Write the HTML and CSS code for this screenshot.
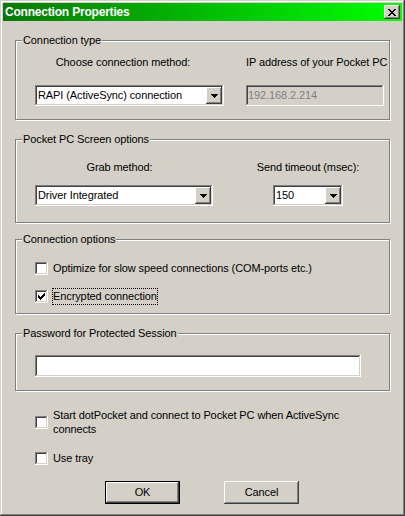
FILE: index.html
```html
<!DOCTYPE html>
<html>
<head>
<meta charset="utf-8">
<title>Connection Properties</title>
<link rel="stylesheet" href="styles.css">
</head>
<body>
<div class="window">
  <div class="titlebar">
    <span class="title">Connection Properties</span>
    <div class="close raised">
      <svg width="8" height="7" viewBox="0 0 8 7" shape-rendering="crispEdges"><path fill="#000" d="M0 0h2v1H0z M6 0h2v1H6z M1 1h2v1H1z M5 1h2v1H5z M2 2h4v1H2z M3 3h2v1H3z M2 4h4v1H2z M1 5h2v1H1z M5 5h2v1H5z M0 6h2v1H0z M6 6h2v1H6z"/></svg>
    </div>
  </div>

  <div class="content">
    <div class="group g1">
      <div class="legend">Connection type</div>
      <div class="cols">
        <div class="col col-method">
          <div class="lbl">Choose connection method:</div>
          <div class="combo">
            <span class="val">RAPI (ActiveSync) connection</span>
            <span class="drop raised"><svg width="7" height="4" viewBox="0 0 7 4" shape-rendering="crispEdges"><path fill="#000" d="M0 0h7v1H0z M1 1h5v1H1z M2 2h3v1H2z M3 3h1v1H3z"/></svg></span>
          </div>
        </div>
        <div class="col col-ip">
          <div class="lbl nowrap">IP address of your Pocket PC</div>
          <div class="field disabled">192.168.2.214</div>
        </div>
      </div>
    </div>

    <div class="group g2">
      <div class="legend">Pocket PC Screen options</div>
      <div class="cols">
        <div class="col col-grab">
          <div class="lbl">Grab method:</div>
          <div class="combo">
            <span class="val">Driver Integrated</span>
            <span class="drop raised"><svg width="7" height="4" viewBox="0 0 7 4" shape-rendering="crispEdges"><path fill="#000" d="M0 0h7v1H0z M1 1h5v1H1z M2 2h3v1H2z M3 3h1v1H3z"/></svg></span>
          </div>
        </div>
        <div class="col col-timeout">
          <div class="lbl nowrap">Send timeout (msec):</div>
          <div class="combo">
            <span class="val">150</span>
            <span class="drop raised"><svg width="7" height="4" viewBox="0 0 7 4" shape-rendering="crispEdges"><path fill="#000" d="M0 0h7v1H0z M1 1h5v1H1z M2 2h3v1H2z M3 3h1v1H3z"/></svg></span>
          </div>
        </div>
      </div>
    </div>

    <div class="group g3">
      <div class="legend">Connection options</div>
      <div class="checks">
        <div class="check">
          <span class="cb"></span>
          <span class="ctext">Optimize for slow speed connections (COM-ports etc.)</span>
        </div>
        <div class="check">
          <span class="cb"><svg width="7" height="7" viewBox="0 0 7 7" shape-rendering="crispEdges"><path fill="#000" d="M6 0h1v1H6z M5 1h2v1H5z M0 2h1v1H0z M4 2h3v1H4z M0 3h2v1H0z M3 3h3v1H3z M0 4h5v1H0z M1 5h3v1H1z M2 6h1v1H2z"/></svg></span>
          <span class="ctext focus">Encrypted connection</span>
        </div>
      </div>
    </div>

    <div class="group g4">
      <div class="legend">Password for Protected Session</div>
      <div class="field password"></div>
    </div>

    <div class="bottom">
      <div class="check multi">
        <span class="cb"></span>
        <span class="ctext wrap">Start dotPocket and connect to Pocket PC when ActiveSync connects</span>
      </div>
      <div class="check tray">
        <span class="cb"></span>
        <span class="ctext">Use tray</span>
      </div>
      <div class="buttons">
        <div class="btn default">OK</div>
        <div class="btn raised">Cancel</div>
      </div>
    </div>
  </div>
</div>
</body>
</html>
```

FILE: styles.css
```css
html, body {
  margin: 0;
  padding: 0;
  background: #d4d0c8;
}

body {
  font-family: "Liberation Sans", Arial, sans-serif;
  font-size: 11px;
  line-height: 13px;
  letter-spacing: -0.1px;
  color: #000;
}

.window {
  width: 405px;
  height: 516px;
  box-sizing: border-box;
  background: #d4d0c8;
  padding: 3px;
  box-shadow:
    inset -1px -1px #404040,
    inset 1px 1px #d4d0c8,
    inset -2px -2px #808080,
    inset 2px 2px #ffffff;
}

.titlebar {
  height: 18px;
  display: flex;
  align-items: center;
  justify-content: space-between;
  padding: 0 2px 0 2px;
  background: linear-gradient(90deg, #087808 0%, #00ff00 100%);
}

.title {
  color: #fff;
  font-weight: bold;
  font-size: 12px;
  letter-spacing: -0.2px;
  line-height: 18px;
}

.raised {
  background: #d4d0c8;
  box-shadow:
    inset -1px -1px #404040,
    inset 1px 1px #ffffff,
    inset -2px -2px #808080,
    inset 2px 2px #d4d0c8;
}

.close {
  width: 16px;
  height: 14px;
  display: flex;
  align-items: center;
  justify-content: center;
}

.close svg {
  display: block;
  margin-top: 1px;
}

.content {
  padding-top: 1px;
}

.group {
  box-sizing: border-box;
  width: 375px;
  margin-left: 12px;
  border: 1px solid #808080;
  box-shadow: 1px 1px #ffffff, inset 1px 1px #ffffff;
}

.g1 { margin-top: 18px; height: 80px; }
.g2 { margin-top: 19px; height: 84px; }
.g3 { margin-top: 16px; height: 75px; }
.g4 { margin-top: 19px; height: 58px; }

.legend {
  width: fit-content;
  margin: -7px 0 0 6px;
  padding: 0 1px;
  background: #d4d0c8;
  white-space: nowrap;
}

.cols {
  display: flex;
  padding-left: 19px;
}

.col {
  display: flex;
  flex-direction: column;
}

.nowrap { white-space: nowrap; }

.g1 .cols { margin-top: 9px; gap: 22px; }
.g1 .col { gap: 16px; }
.col-method { width: 189px; }
.col-method .lbl { text-align: center; padding-right: 13px; }
.col-ip { width: 138px; }

.g2 .cols { margin-top: 15px; gap: 60px; }
.g2 .col { gap: 11px; }
.col-grab { width: 178px; }
.col-grab .lbl { text-align: center; padding-right: 9px; }
.col-timeout { width: 70px; align-items: center; }
.col-timeout .combo { align-self: stretch; }

.combo {
  box-sizing: border-box;
  height: 21px;
  padding: 2px;
  display: flex;
  background: #fff;
  box-shadow:
    inset -1px -1px #ffffff,
    inset 1px 1px #808080,
    inset -2px -2px #d4d0c8,
    inset 2px 2px #404040;
}

.combo .val {
  flex: 1;
  padding-left: 1px;
  line-height: 17px;
  white-space: nowrap;
  overflow: hidden;
}

.drop {
  width: 16px;
  height: 17px;
  display: flex;
  align-items: center;
  justify-content: center;
  flex: none;
}

.drop svg { display: block; }

.field {
  box-sizing: border-box;
  height: 21px;
  padding: 2px 2px;
  line-height: 17px;
  background: #fff;
  box-shadow:
    inset -1px -1px #ffffff,
    inset 1px 1px #808080,
    inset -2px -2px #d4d0c8,
    inset 2px 2px #404040;
}

.field.disabled {
  background: #d4d0c8;
  color: #808080;
}

.field.password {
  width: 326px;
  height: 22px;
  margin: 15px 0 0 19px;
}

.checks {
  display: flex;
  flex-direction: column;
  gap: 11px;
  margin-top: 14px;
  padding-left: 19px;
}

.check {
  display: flex;
  align-items: center;
  gap: 4px;
  min-height: 17px;
}

.cb {
  box-sizing: border-box;
  width: 13px;
  height: 13px;
  flex: none;
  display: flex;
  align-items: center;
  justify-content: center;
  background: #fff;
  box-shadow:
    inset -1px -1px #ffffff,
    inset 1px 1px #808080,
    inset -2px -2px #d4d0c8,
    inset 2px 2px #404040;
}

.cb svg { display: block; }

.ctext {
  border: 1px dotted transparent;
  padding: 1px 0;
  white-space: nowrap;
}

.ctext.focus {
  border-color: #000;
}

.bottom {
  padding-left: 32px;
}

.check.multi {
  margin-top: 16px;
}

.ctext.wrap {
  white-space: normal;
  width: 310px;
  line-height: 14px;
  padding: 0;
}

.check.tray {
  margin-top: 13px;
}

.buttons {
  display: flex;
  gap: 44px;
  margin-top: 14px;
  padding-left: 70px;
}

.btn {
  box-sizing: border-box;
  width: 75px;
  height: 23px;
  display: flex;
  align-items: center;
  justify-content: center;
  line-height: 13px;
}

.btn.default {
  background: #d4d0c8;
  border: 1px solid #000;
  box-shadow:
    inset -1px -1px #404040,
    inset 1px 1px #ffffff,
    inset -2px -2px #808080,
    inset 2px 2px #d4d0c8;
}
```
